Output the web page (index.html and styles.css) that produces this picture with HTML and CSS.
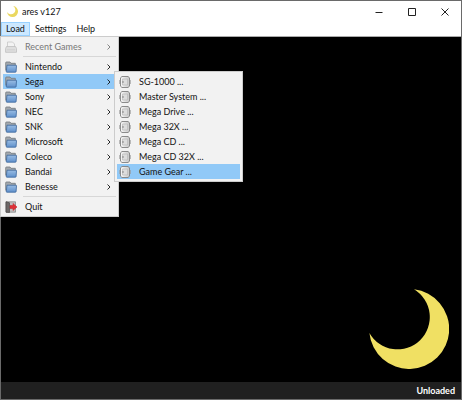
FILE: index.html
```
<!DOCTYPE html>
<html lang="en">
<head>
<meta charset="utf-8">
<title>ares v127</title>
<link rel="stylesheet" href="styles.css">
</head>
<body>
<svg class="defs" aria-hidden="true">
  <defs>
    <linearGradient id="blue" x2="0" y2="1"><stop offset="0" stop-color="#9abde4"/><stop offset="1" stop-color="#5f90cb"/></linearGradient>
    <linearGradient id="gray" x2="1" y2="0"><stop offset="0" stop-color="#fafafa"/><stop offset="1" stop-color="#c8c8c8"/></linearGradient>
    <symbol id="crescent" viewBox="0 0 80 80"><path d="M45 .3A40 40 0 1 1 .4 44A32.3 32.3 0 1 0 45 .3Z"/></symbol>
    <symbol id="folder" viewBox="0 0 12 12">
      <path d="M.7 9.500V1.700Q.7 1 1.400 1H5l1 1.300h4.300v3" fill="#a3a8ad" stroke="#71777d" stroke-width=".8"/>
      <path d="M2 4.200h9q.6 0 .5.600l-.4 5.800q-.1.600-.7.600H1.800q-.6 0-.5-.6z" fill="url(#blue)" stroke="#3a659b" stroke-width=".8"/>
    </symbol>
    <symbol id="recent" viewBox="0 0 12 12">
      <path d="M2.500 6V1h5L9.500 3v3" fill="#f4f4f4" stroke="#bcbcbc" stroke-width=".8"/>
      <path d="M1.500 5.500h9l1 2v3.800H.6V7.500z" fill="#dadada" stroke="#b2b2b2" stroke-width=".8"/>
      <path d="M2 8.800h8" stroke="#c2c2c2" stroke-width=".8"/>
    </symbol>
    <symbol id="device" viewBox="0 0 12 12">
      <path d="M3 .5h6l1.500 1.300v8.400L9 11.500H3L1.500 10.200V1.800z" fill="url(#gray)" stroke="#808080" stroke-width=".9"/>
      <path d="M.7 4v4M11.300 4v4" stroke="#999" stroke-width=".8"/>
      <path d="M3.500 3h5v6h-5z" fill="#ddd" stroke="#b4b4b4" stroke-width=".6"/>
      <path d="M3 6h1.800M4 5.200v1.600" stroke="#888" stroke-width=".7"/>
    </symbol>
    <symbol id="exit" viewBox="0 0 12 12">
      <path d="M1 .8h9.500v10.400H1z" fill="#bfbfbf" stroke="#888" stroke-width=".8"/>
      <path d="M1 .8l3.500 1v9.700L1 11.200z" fill="#6c6868" stroke="#4c4848" stroke-width=".7"/>
      <path d="M5 4.500h3V2.500L12 6 8 9.500v-2H5z" fill="#df3036" stroke="#c52d33" stroke-width=".6"/>
    </symbol>
    <symbol id="chevron" viewBox="0 0 5 8"><path d="M1.500 1.500L4 4L1.500 6.500" fill="none" stroke="currentColor" stroke-width=".9"/></symbol>
  </defs>
</svg>
<div class="window">
  <header class="titlebar">
    <svg class="logo"><use href="#crescent"/></svg>
    <h1 class="title">ares v127</h1>
    <button class="control" aria-label="Minimize"><svg viewBox="0 0 8 8"><path d="M.5 4.500h7"/></svg></button>
    <button class="control" aria-label="Maximize"><svg viewBox="0 0 8 8"><path d="M.5 .5h7v7h-7z"/></svg></button>
    <button class="control" aria-label="Close"><svg viewBox="0 0 8 8"><path d="M.5 .5l7 7M7.500 .5l-7 7"/></svg></button>
  </header>
  <nav class="menubar">
    <div class="entry">
      <button class="top open">Load</button>
      <div class="menu">
        <button class="item" disabled><svg class="icon"><use href="#recent"/></svg><span>Recent Games</span><svg class="arrow"><use href="#chevron"/></svg></button>
        <hr>
        <button class="item"><svg class="icon"><use href="#folder"/></svg><span>Nintendo</span><svg class="arrow"><use href="#chevron"/></svg></button>
        <div class="entry">
          <button class="item active"><svg class="icon"><use href="#folder"/></svg><span>Sega</span><svg class="arrow"><use href="#chevron"/></svg></button>
          <div class="menu submenu">
            <button class="item"><svg class="icon"><use href="#device"/></svg><span>SG-1000 ...</span></button>
            <button class="item"><svg class="icon"><use href="#device"/></svg><span>Master System ...</span></button>
            <button class="item"><svg class="icon"><use href="#device"/></svg><span>Mega Drive ...</span></button>
            <button class="item"><svg class="icon"><use href="#device"/></svg><span>Mega 32X ...</span></button>
            <button class="item"><svg class="icon"><use href="#device"/></svg><span>Mega CD ...</span></button>
            <button class="item"><svg class="icon"><use href="#device"/></svg><span>Mega CD 32X ...</span></button>
            <button class="item active"><svg class="icon"><use href="#device"/></svg><span>Game Gear ...</span></button>
          </div>
        </div>
        <button class="item"><svg class="icon"><use href="#folder"/></svg><span>Sony</span><svg class="arrow"><use href="#chevron"/></svg></button>
        <button class="item"><svg class="icon"><use href="#folder"/></svg><span>NEC</span><svg class="arrow"><use href="#chevron"/></svg></button>
        <button class="item"><svg class="icon"><use href="#folder"/></svg><span>SNK</span><svg class="arrow"><use href="#chevron"/></svg></button>
        <button class="item"><svg class="icon"><use href="#folder"/></svg><span>Microsoft</span><svg class="arrow"><use href="#chevron"/></svg></button>
        <button class="item"><svg class="icon"><use href="#folder"/></svg><span>Coleco</span><svg class="arrow"><use href="#chevron"/></svg></button>
        <button class="item"><svg class="icon"><use href="#folder"/></svg><span>Bandai</span><svg class="arrow"><use href="#chevron"/></svg></button>
        <button class="item"><svg class="icon"><use href="#folder"/></svg><span>Benesse</span><svg class="arrow"><use href="#chevron"/></svg></button>
        <hr>
        <button class="item"><svg class="icon"><use href="#exit"/></svg><span>Quit</span></button>
      </div>
    </div>
    <button class="top">Settings</button>
    <button class="top">Help</button>
  </nav>
  <main class="viewport"><svg class="moon"><use href="#crescent"/></svg></main>
  <footer class="status">Unloaded</footer>
</div>
</body>
</html>
```
FILE: styles.css
```
* { box-sizing: border-box; }
body {
  margin: 0;
  color: #111;
  font: 9px/14px Lato, "Open Sans", sans-serif;
}
button {
  margin: 0;
  padding: 0;
  border: 0;
  background: none;
  color: inherit;
  font: inherit;
}
svg { display: block; flex: none; }
.defs { position: absolute; width: 0; height: 0; }
.window {
  display: flex;
  flex-direction: column;
  height: 100vh;
  border: 1px solid #6a6a6a;
  background: #fff;
}
.titlebar {
  display: flex;
  align-items: center;
  height: 21px;
  padding-left: 6px;
}
.logo { width: 11px; height: 11px; fill: #ead860; }
.title {
  flex: 1;
  margin: 0 0 0 4px;
  font-size: 9px;
  font-weight: 400;
}
.control {
  display: grid;
  place-items: center;
  width: 33px;
  height: 20px;
}
.control svg { width: 8px; height: 8px; fill: none; stroke: #222; }
.menubar {
  display: flex;
  height: 15px;
  border-bottom: 1px solid #aaa;
}
.entry { position: relative; }
.top { height: 14px; padding: 0 5px; }
.open { background: #cce8ff; box-shadow: inset 0 0 0 1px #99d1ff; }
.menu {
  position: absolute;
  z-index: 1;
  top: 14px;
  left: -1px;
  width: 119px;
  padding: 2px;
  border: 1px solid #ccc;
  background: #f2f2f2;
}
.submenu { top: -3px; left: 111px; width: 129px; }
.item {
  display: flex;
  align-items: center;
  width: 100%;
  height: 15px;
  padding: 0 5px 0 2px;
  text-align: left;
  white-space: nowrap;
}
.item:disabled { color: #777; }
.item:disabled .icon { opacity: .8; }
.item span { flex: 1; }
.active { background: #91c9f7; }
.icon { width: 12px; height: 12px; margin-right: 8px; }
.arrow { width: 5px; height: 8px; }
hr {
  height: 1px;
  margin: 2px 0 2px 20px;
  border: 0;
  background: #d7d7d7;
}
.viewport {
  display: flex;
  flex: 1;
  align-items: flex-end;
  justify-content: flex-end;
  padding: 13px 12px;
  background: #000;
}
.moon { width: 80px; height: 80px; fill: #f0e063; }
.status {
  height: 17px;
  padding: 0 6px;
  background: #202020;
  color: #fff;
  font-weight: 700;
  line-height: 17px;
  text-align: right;
}
```
